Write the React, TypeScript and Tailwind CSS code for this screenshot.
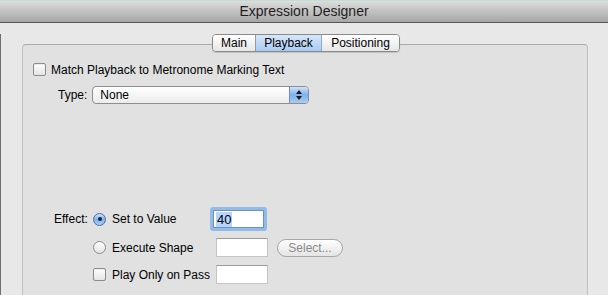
import React from "react";

const font = "font-['Liberation_Sans',Arial,sans-serif]";

const Checkbox = () => (
  <div className="w-[13px] h-[13px] shrink-0 rounded-[2px] border border-[#8c8c8c] bg-gradient-to-b from-[#ffffff] to-[#e4e4e4] shadow-[inset_0_1px_1px_rgba(0,0,0,0.08)]" />
);

const Radio = ({ checked }: { checked?: boolean }) =>
  checked ? (
    <div className="w-[13px] h-[13px] shrink-0 rounded-full border border-[#4a6fa5] bg-gradient-to-b from-[#cfe2fb] via-[#7fb0ec] to-[#a9cdf6] flex items-center justify-center">
      <div className="w-[4px] h-[4px] rounded-full bg-[#1c2530]" />
    </div>
  ) : (
    <div className="w-[13px] h-[13px] shrink-0 rounded-full border border-[#8c8c8c] bg-gradient-to-b from-[#ffffff] to-[#e2e2e2]" />
  );

const Field = () => (
  <div className="w-[52px] h-[19px] shrink-0 bg-white border border-[#c4c4c4] border-t-[#9c9c9c]" />
);

export default function App() {
  return (
    <div className={`w-[608px] h-[295px] overflow-hidden bg-[#e8e8e8] text-black ${font}`}>
      {/* TITLE BAR */}
      <div className="h-[23px] border-t border-[#c4dcd6] border-b border-b-[#555] bg-gradient-to-b from-[#dddddd] to-[#a6a6a6] flex items-center justify-center text-[14px] text-[#1e1e1e]">
        Expression Designer
      </div>

      {/* BODY */}
      <div className="h-full border-l border-[#707070] pl-[21px]">
        {/* TABS */}
        <div className="w-[566px] flex justify-center mt-[11px] -mb-[8px] relative z-10 pl-[2px]">
          <div className="flex h-[18px] rounded-[4px] border border-[#8a8a8a] overflow-hidden text-[12px] shadow-[0_1px_1px_rgba(0,0,0,0.15)]">
            <div className="w-[43px] flex items-center justify-center bg-gradient-to-b from-[#ffffff] to-[#e6e6e6] border-r border-[#9a9a9a]">Main</div>
            <div className="w-[66px] flex items-center justify-center bg-gradient-to-b from-[#d6e7fb] to-[#a9cbf2] border-r border-[#8fa6c4]">Playback</div>
            <div className="w-[77px] flex items-center justify-center bg-gradient-to-b from-[#ffffff] to-[#e6e6e6]">Positioning</div>
          </div>
        </div>

        {/* GROUP BOX */}
        <div className="w-[566px] h-[300px] rounded-t-[4px] border border-[#c0c0c0] border-t-[#a9a9a9] bg-[#e1e1e1] pl-[10px] text-[12px] whitespace-nowrap">
          <div className="flex items-center gap-[5px] mt-[18px] h-[13px]">
            <Checkbox />
            <span>Match Playback to Metronome Marking Text</span>
          </div>

          <div className="flex items-center mt-[10px] h-[18px] pl-[25px]">
            <span className="mr-[5px]">Type:</span>
            <div className="w-[217px] h-[18px] rounded-[4px] border border-[#8e8e8e] bg-gradient-to-b from-[#ffffff] to-[#ececec] flex items-center overflow-hidden">
              <span className="flex-1 pl-[7px]">None</span>
              <div className="w-[19px] h-full bg-gradient-to-b from-[#cfe2fb] via-[#7eb0ec] to-[#a9cdf6] border-l border-[#6d8fbf] flex flex-col items-center justify-center gap-[2px]">
                <svg width="6" height="4" viewBox="0 0 6 4"><path d="M0 4 L3 0 L6 4Z" fill="#1a1a1a" /></svg>
                <svg width="6" height="4" viewBox="0 0 6 4"><path d="M0 0 L3 4 L6 0Z" fill="#1a1a1a" /></svg>
              </div>
            </div>
          </div>

          {/* EFFECT */}
          <div className="flex items-center mt-[106px] h-[18px]">
            <span className="w-[60px] pl-[21px] shrink-0">Effect:</span>
            <Radio checked />
            <span className="ml-[6px] w-[101px] shrink-0">Set to Value</span>
            <div className="rounded-[1px] ring-[3px] ring-[#93bbea]">
              <div className="w-[51px] h-[18px] bg-white border border-[#6f8fbf] flex items-center px-[2px] text-[13px]">
                <span className="bg-[#b5d5ff] px-[1px] leading-[15px]">40</span>
              </div>
            </div>
          </div>

          <div className="flex items-center mt-[10px] h-[19px] pl-[60px]">
            <Radio />
            <span className="ml-[6px] w-[104px] shrink-0">Execute Shape</span>
            <Field />
            <div className="ml-[9px] w-[66px] h-[18px] rounded-full border border-[#a6a6a6] bg-gradient-to-b from-[#ffffff] to-[#e4e4e4] flex items-center justify-center text-[#8a8a8a]">
              Select...
            </div>
          </div>

          <div className="flex items-center mt-[8px] h-[19px] pl-[60px]">
            <Checkbox />
            <span className="ml-[6px] w-[104px] shrink-0">Play Only on Pass</span>
            <Field />
          </div>
        </div>
      </div>
    </div>
  );
}
